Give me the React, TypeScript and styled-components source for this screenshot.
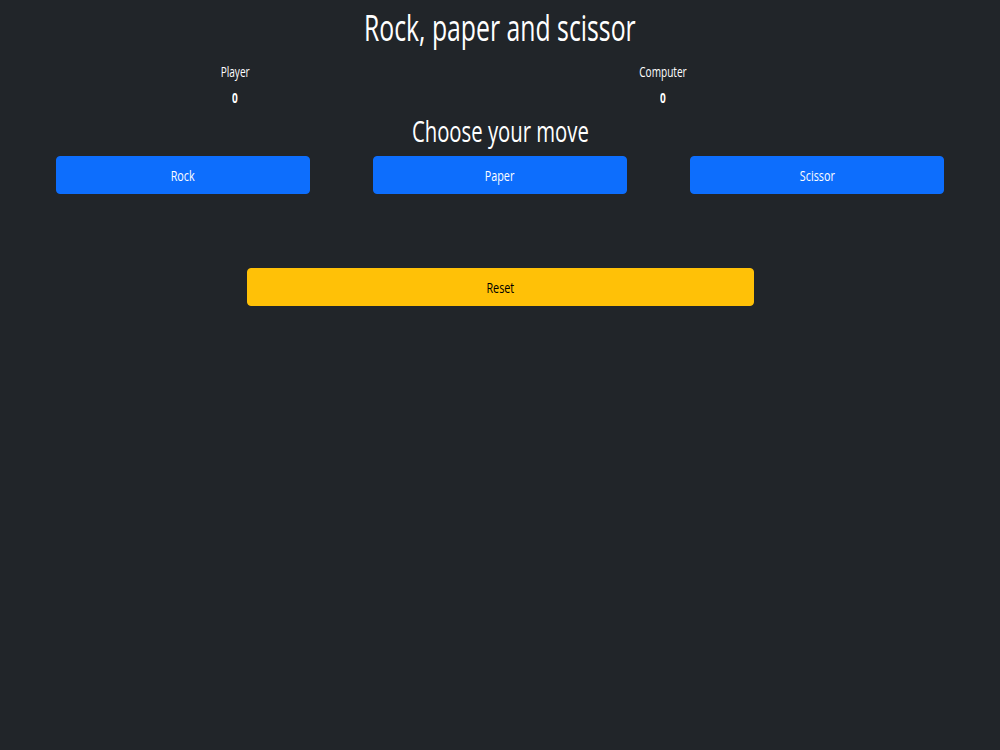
import styled, { createGlobalStyle } from "styled-components";

const GlobalStyle = createGlobalStyle`
  html, body {
    margin: 0;
    padding: 0;
    background: #212529;
    color: #fff;
    font-family: "Open Sans", "Noto Sans", sans-serif;
  }
`;

const Page = styled.div`
  width: 1000px;
  min-height: 750px;
  background: #212529;
`;

const Squeeze = styled.span<{ $x?: number }>`
  display: inline-block;
  transform: scaleX(${(p) => p.$x ?? 0.72});
  white-space: nowrap;
`;

const Title = styled.h1`
  margin: 0;
  padding-top: 3px;
  height: 58px;
  font-size: 37px;
  font-weight: 400;
  line-height: 48px;
  text-align: center;
`;

const ScoreRow = styled.div`
  display: grid;
  grid-template-columns: 428px 428px;
  padding-left: 21px;
  margin-bottom: 2px;
`;

const ScoreCol = styled.div`
  display: flex;
  flex-direction: column;
  align-items: center;
`;

const ScoreLabel = styled.div`
  font-size: 14px;
  line-height: 22px;
  height: 26px;
`;

const ScoreValue = styled.div`
  font-size: 14px;
  font-weight: 700;
  line-height: 22px;
`;

const Subtitle = styled.h2`
  margin: 0;
  font-size: 29px;
  font-weight: 400;
  line-height: 40px;
  text-align: center;
`;

const Moves = styled.div`
  display: flex;
  justify-content: space-between;
  padding: 0 56px;
  margin-top: 5px;
`;

const Button = styled.button<{ $variant?: "primary" | "warning" }>`
  width: ${(p) => (p.$variant === "warning" ? "507px" : "254px")};
  height: 38px;
  border: 1px solid ${(p) => (p.$variant === "warning" ? "#ffc107" : "#0d6efd")};
  border-radius: 4px;
  background: ${(p) => (p.$variant === "warning" ? "#ffc107" : "#0d6efd")};
  color: ${(p) => (p.$variant === "warning" ? "#000" : "#fff")};
  font-family: "Open Sans", "Noto Sans", sans-serif;
  font-size: 15px;
  cursor: pointer;
`;

const ResetRow = styled.div`
  display: flex;
  justify-content: center;
  padding-left: 1px;
  margin-top: 74px;
`;

export default function App() {
  return (
    <Page>
      <GlobalStyle />
      <Title>
        <Squeeze $x={0.67}>Rock, paper and scissor</Squeeze>
      </Title>
      <ScoreRow>
        <ScoreCol>
          <ScoreLabel>
            <Squeeze>Player</Squeeze>
          </ScoreLabel>
          <ScoreValue>
            <Squeeze>0</Squeeze>
          </ScoreValue>
        </ScoreCol>
        <ScoreCol>
          <ScoreLabel>
            <Squeeze>Computer</Squeeze>
          </ScoreLabel>
          <ScoreValue>
            <Squeeze>0</Squeeze>
          </ScoreValue>
        </ScoreCol>
      </ScoreRow>
      <Subtitle>
        <Squeeze $x={0.7}>Choose your move</Squeeze>
      </Subtitle>
      <Moves>
        <Button>
          <Squeeze>Rock</Squeeze>
        </Button>
        <Button>
          <Squeeze>Paper</Squeeze>
        </Button>
        <Button>
          <Squeeze>Scissor</Squeeze>
        </Button>
      </Moves>
      <ResetRow>
        <Button $variant="warning">
          <Squeeze>Reset</Squeeze>
        </Button>
      </ResetRow>
    </Page>
  );
}
